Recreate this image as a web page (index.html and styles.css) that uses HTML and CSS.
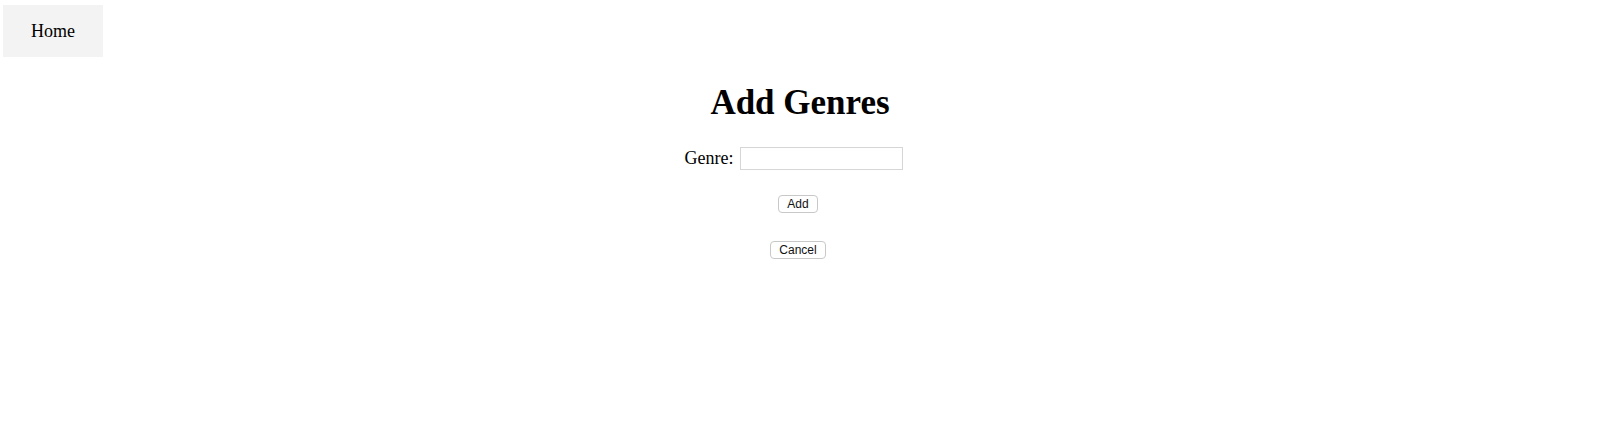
FILE: index.html
```html
<!DOCTYPE html>
<html>
<head>
<meta charset="utf-8">
<link rel="stylesheet" href="styles.css">
</head>
<body>
<nav class="nav"><a class="nav-item" href="#">Home</a></nav>
<main class="main">
  <h1 class="title">Add Genres</h1>
  <form class="form">
    <div class="field">
      <label class="label" for="genre">Genre:</label>
      <input class="input" id="genre" type="text">
    </div>
    <button class="btn btn-add" type="button">Add</button>
    <button class="btn btn-cancel" type="button">Cancel</button>
  </form>
</main>
</body>
</html>
```
FILE: styles.css
```css
html, body {
  margin: 0;
  padding: 0;
  background: #fff;
  font-family: "Liberation Serif", "Times New Roman", serif;
  color: #000;
}
.nav {
  display: flex;
  padding: 5px 3px 0;
}
.nav-item {
  display: flex;
  align-items: center;
  justify-content: center;
  width: 100px;
  height: 52px;
  background: #f3f3f3;
  color: #000;
  text-decoration: none;
  font-size: 18px;
}
.main {
  display: flex;
  flex-direction: column;
  align-items: center;
}
.title {
  margin: 26px 0 0;
  font-size: 35px;
  font-weight: bold;
  line-height: 40px;
}
.form {
  display: flex;
  flex-direction: column;
  align-items: center;
  padding-right: 4px;
}
.field {
  display: flex;
  align-items: center;
  gap: 7px;
  margin-top: 24px;
  padding-right: 8px;
  font-size: 18px;
}
.input {
  width: 161px;
  height: 21px;
  padding: 0;
  border: 1px solid #d6d6d6;
  margin: 0;
  outline: none;
}
.btn {
  background: #fff;
  border: 1px solid #c8c8c8;
  border-radius: 4px;
  font-family: "Liberation Sans", Arial, sans-serif;
  font-size: 12px;
  color: #111;
  padding: 0 8px;
  height: 18px;
  line-height: 16px;
}
.btn-add {
  margin-top: 25px;
}
.btn-cancel {
  margin-top: 28px;
}
```
